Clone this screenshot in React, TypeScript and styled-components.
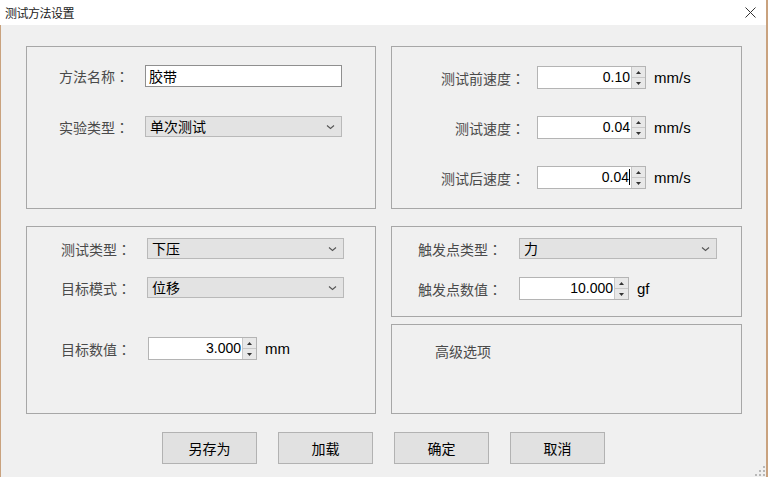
import React from "react";
import styled, {createGlobalStyle} from "styled-components";

const GlobalStyle = createGlobalStyle`
  html, body {
    margin: 0;
    padding: 0;
    background: #f0f0f0;
  }
  body {
    font-family: "Noto Sans CJK SC", "Liberation Sans", sans-serif;
  }
`

const Chevron = () => (
	<svg width="9" height="6" viewBox="0 0 9 6">
		<path d="M1 1.5 L4.5 4.5 L8 1.5" fill="none" stroke="#555" strokeWidth="1.1"/>
	</svg>
)

type SpinProps = {value: string, width: number, caret?: boolean}

const Spin = ({value, width, caret}: SpinProps) => (
	<SpinBox style={{width}}>
		<SpinText>{value}{caret && <Caret/>}</SpinText>
		<SpinButtons>
			<SpinBtn>
				<svg width="5" height="3" viewBox="0 0 5 3"><path d="M0 3 L2.5 0 L5 3 Z" fill="#333"/></svg>
			</SpinBtn>
			<SpinBtn>
				<svg width="5" height="3" viewBox="0 0 5 3"><path d="M0 0 L2.5 3 L5 0 Z" fill="#333"/></svg>
			</SpinBtn>
		</SpinButtons>
	</SpinBox>
)

const Select = ({value, width}: {value: string, width: number}) => (
	<SelectBox style={{width}}>
		<span>{value}</span>
		<Chevron/>
	</SelectBox>
)

type FieldLabelProps = {text: string, width: number, right?: boolean}

const FieldLabel = ({text, width, right}: FieldLabelProps) => (
	<Label $width={width} $right={right}>
		{text}<Colon>：</Colon>
	</Label>
)

export default function App() {
	return (
		<>
			<GlobalStyle/>
			<Window>
				<TitleBar>
					<Title>测试方法设置</Title>
					<CloseIcon>
						<svg width="11" height="11" viewBox="0 0 11 11">
							<path d="M0.5 0.5 L10.5 10.5 M10.5 0.5 L0.5 10.5" stroke="#333" strokeWidth="1"/>
						</svg>
					</CloseIcon>
				</TitleBar>
				<Body>
					<Columns>
						<Column $width={350}>
							<Panel $height={163} $pad="18px 0 0 32px" $gap={29}>
								<Row>
									<FieldLabel text="方法名称" width={86}/>
									<TextInput>胶带</TextInput>
								</Row>
								<Row>
									<FieldLabel text="实验类型" width={86}/>
									<Select value="单次测试" width={197}/>
								</Row>
							</Panel>
							<Panel $height={188} $pad="11px 0 0 34px" $gap={18}>
								<Row>
									<FieldLabel text="测试类型" width={86}/>
									<Select value="下压" width={197}/>
								</Row>
								<Row>
									<FieldLabel text="目标模式" width={86}/>
									<Select value="位移" width={197}/>
								</Row>
								<Row $top={21}>
									<FieldLabel text="目标数值" width={87}/>
									<Spin value="3.000" width={109}/>
									<Unit>mm</Unit>
								</Row>
							</Panel>
						</Column>
						<Column $width={351}>
							<Panel $height={163} $pad="19px 0 0 26px" $gap={27}>
								<Row>
									<FieldLabel text="测试前速度" width={119} right/>
									<Spin value="0.10" width={109}/>
									<Unit>mm/s</Unit>
								</Row>
								<Row>
									<FieldLabel text="测试速度" width={119} right/>
									<Spin value="0.04" width={109}/>
									<Unit>mm/s</Unit>
								</Row>
								<Row>
									<FieldLabel text="测试后速度" width={119} right/>
									<Spin value="0.04" width={109} caret/>
									<Unit>mm/s</Unit>
								</Row>
							</Panel>
							<RightStack>
								<Panel $height={91} $pad="11px 0 0 26px" $gap={18}>
									<Row>
										<FieldLabel text="触发点类型" width={101}/>
										<Select value="力" width={198}/>
									</Row>
									<Row>
										<FieldLabel text="触发点数值" width={101}/>
										<Spin value="10.000" width={110}/>
										<Unit>gf</Unit>
									</Row>
								</Panel>
								<Panel $height={90} $pad="16px 0 0 43px" $gap={0}>
									<Label $width={80}>高级选项</Label>
								</Panel>
							</RightStack>
						</Column>
					</Columns>
					<ButtonRow>
						<Button>另存为</Button>
						<Button>加载</Button>
						<Button>确定</Button>
						<Button>取消</Button>
					</ButtonRow>
					<Grip>
						<svg width="10" height="10" viewBox="0 0 10 10" fill="#b8b8b8">
							<rect x="8" y="0" width="2" height="2"/>
							<rect x="4" y="4" width="2" height="2"/>
							<rect x="8" y="4" width="2" height="2"/>
							<rect x="0" y="8" width="2" height="2"/>
							<rect x="4" y="8" width="2" height="2"/>
							<rect x="8" y="8" width="2" height="2"/>
						</svg>
					</Grip>
				</Body>
			</Window>
		</>
	)
}

const Window = styled.div`
  width: 768px;
  height: 477px;
  box-sizing: border-box;
  border-right: 2px solid #c9a27e;
  display: flex;
  flex-direction: column;
  background: #f0f0f0;
  overflow: hidden;
`
const TitleBar = styled.div`
  height: 25px;
  flex-shrink: 0;
  background: #ffffff;
  display: flex;
  align-items: center;
  justify-content: space-between;
  padding: 0 10px 0 5px;
`
const Title = styled.div`
  font-size: 12px;
  color: #222;
  letter-spacing: -0.5px;
`
const CloseIcon = styled.div`
  display: flex;
  align-items: center;
`
const Body = styled.div`
  position: relative;
  flex: 1;
  border-left: 1px solid #c9a27e;
  padding: 21px 0 0 25px;
`
const Columns = styled.div`
  display: flex;
  gap: 15px;
`
const Column = styled.div<{$width: number}>`
  display: flex;
  flex-direction: column;
  gap: 17px;
  width: ${p => p.$width}px;
`
const RightStack = styled.div`
  display: flex;
  flex-direction: column;
  gap: 7px;
`
const Panel = styled.div<{$height: number, $pad: string, $gap: number}>`
  height: ${p => p.$height}px;
  box-sizing: border-box;
  border: 1px solid #a7a7a7;
  padding: ${p => p.$pad};
  display: flex;
  flex-direction: column;
  gap: ${p => p.$gap}px;
`
const Row = styled.div<{$top?: number}>`
  display: flex;
  align-items: center;
  margin-top: ${p => p.$top || 0}px;
`
const Label = styled.div<{$width: number, $right?: boolean}>`
  width: ${p => p.$width}px;
  flex-shrink: 0;
  font-size: 14px;
  color: #4a4a4a;
  text-align: ${p => p.$right ? "right" : "left"};
  padding-right: ${p => p.$right ? 12 : 0}px;
  box-sizing: border-box;
  white-space: nowrap;
`
const Colon = styled.span`
  font-family: "Noto Sans CJK TC", "Noto Sans CJK SC", sans-serif;
`
const TextInput = styled.div`
  width: 197px;
  height: 22px;
  box-sizing: border-box;
  border: 1px solid #8f8f8f;
  background: #fff;
  font-size: 14px;
  line-height: 20px;
  padding-left: 3px;
  color: #000;
`
const SelectBox = styled.div`
  height: 21px;
  box-sizing: border-box;
  border: 1px solid #b9b9b9;
  background: #e3e3e3;
  font-size: 14px;
  line-height: 19px;
  color: #000;
  display: flex;
  align-items: center;
  justify-content: space-between;
  padding: 0 6px 0 4px;
`
const SpinBox = styled.div`
  height: 23px;
  box-sizing: border-box;
  border: 1px solid #b4b4b4;
  background: #fff;
  display: flex;
`
const SpinText = styled.div`
  flex: 1;
  text-align: right;
  font-family: "Liberation Sans", "Noto Sans CJK SC", sans-serif;
  font-size: 14px;
  line-height: 21px;
  color: #000;
  padding-right: 1px;
`
const Caret = styled.span`
  display: inline-block;
  width: 1px;
  height: 16px;
  background: #000;
  vertical-align: -3px;
`
const SpinButtons = styled.div`
  width: 13px;
  display: flex;
  flex-direction: column;
  border-left: 1px solid #c8c8c8;
`
const SpinBtn = styled.div`
  flex: 1;
  background: #e8e8e8;
  display: flex;
  align-items: center;
  justify-content: center;
  & + & {
    border-top: 1px solid #c8c8c8;
  }
`
const Unit = styled.div`
  margin-left: 8px;
  font-family: "Liberation Sans", sans-serif;
  font-size: 15px;
  color: #000;
`
const ButtonRow = styled.div`
  display: flex;
  gap: 21px;
  padding: 18px 0 0 136px;
`
const Button = styled.div`
  width: 95px;
  height: 32px;
  box-sizing: border-box;
  border: 1px solid #b2b2b2;
  background: #e1e1e1;
  font-size: 14px;
  color: #000;
  display: flex;
  align-items: center;
  justify-content: center;
`
const Grip = styled.div`
  position: absolute;
  right: 1px;
  bottom: 1px;
  line-height: 0;
`
